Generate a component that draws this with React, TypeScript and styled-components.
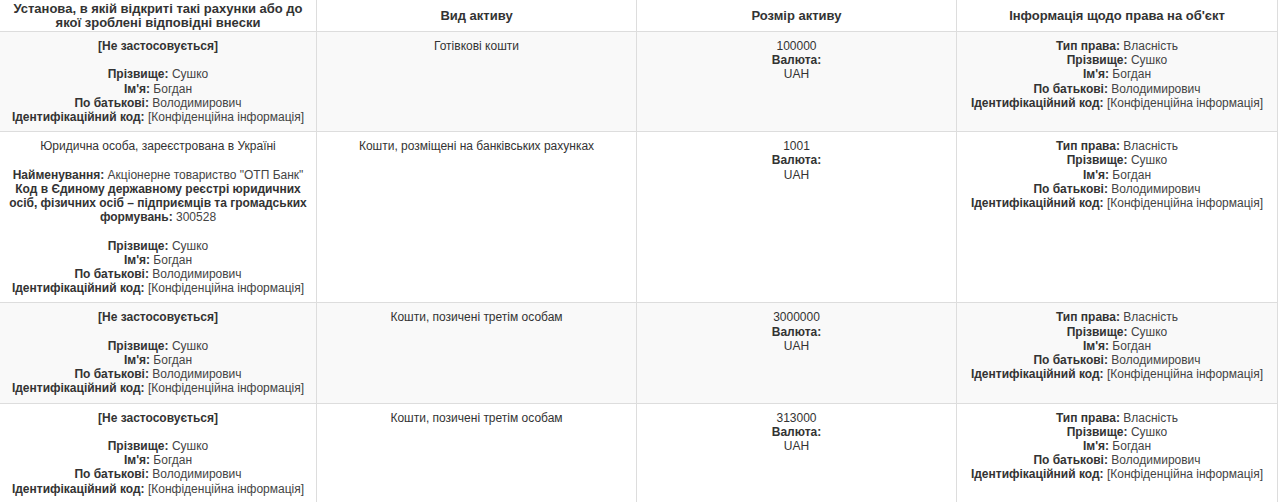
import React from "react";
import styled, { createGlobalStyle } from "styled-components";

const Global = createGlobalStyle`
  html, body { margin: 0; padding: 0; background: #fff; }
  body { font-family: "Liberation Sans", Arial, sans-serif; color: #333; }
`;

const Table = styled.div`
  width: 1278px;
  display: flex;
  flex-direction: column;
`;

const Row = styled.div<{ $striped?: boolean }>`
  display: grid;
  grid-template-columns: 317px 320px 320px 321px;
  background: ${(p) => (p.$striped ? "#f9f9f9" : "#fff")};
`;

const HeadCell = styled.div`
  box-sizing: border-box;
  padding: 2px 8px 1px;
  border-right: 1px solid #ddd;
  border-bottom: 1px solid #ddd;
  font-size: 13px;
  line-height: 14px;
  font-weight: bold;
  color: #333;
  text-align: center;
  display: flex;
  align-items: center;
  justify-content: center;
  min-height: 32px;
`;

const Cell = styled.div`
  box-sizing: border-box;
  padding: 7px 8px 7px;
  border-right: 1px solid #ddd;
  border-bottom: 1px solid #ddd;
  font-size: 12px;
  line-height: 14.2px;
  color: #333;
  text-align: center;
`;

const Label = styled.b`
  font-weight: bold;
  color: #333;
`;

const Value = styled.span`
  color: #444;
`;

const Blank = styled.div`
  height: 14.2px;
`;

const Line: React.FC<{ label?: string; value?: string }> = ({ label, value }) => (
  <div>
    {label && <Label>{label}: </Label>}
    {value && <Value>{value}</Value>}
  </div>
);

const Person: React.FC = () => (
  <>
    <Line label="Прізвище" value="Сушко" />
    <Line label="Ім'я" value="Богдан" />
    <Line label="По батькові" value="Володимирович" />
    <Line label="Ідентифікаційний код" value="[Конфіденційна інформація]" />
  </>
);

const Rights: React.FC = () => (
  <Cell>
    <Line label="Тип права" value="Власність" />
    <Person />
  </Cell>
);

const Amount: React.FC<{ sum: string }> = ({ sum }) => (
  <Cell>
    <div>{sum}</div>
    <div>
      <Label>Валюта:</Label>
    </div>
    <div>UAH</div>
  </Cell>
);

const NotApplicable: React.FC = () => (
  <Cell>
    <div>
      <Label>[Не застосовується]</Label>
    </div>
    <Blank />
    <Person />
  </Cell>
);

const LegalEntity: React.FC = () => (
  <Cell>
    <div>Юридична особа, зареєстрована в Україні</div>
    <Blank />
    <Line label="Найменування" value={'Акціонерне товариство "ОТП Банк"'} />
    <div>
      <Label>Код в Єдиному державному реєстрі юридичних осіб, фізичних осіб – підприємців та громадських формувань:</Label>{" "}
      <Value>300528</Value>
    </div>
    <Blank />
    <Person />
  </Cell>
);

const rows = [
  { kind: "na", asset: "Готівкові кошти", sum: "100000" },
  { kind: "bank", asset: "Кошти, розміщені на банківських рахунках", sum: "1001" },
  { kind: "na", asset: "Кошти, позичені третім особам", sum: "3000000" },
  { kind: "na", asset: "Кошти, позичені третім особам", sum: "313000" },
];

export default function App() {
  return (
    <>
      <Global />
      <Table>
        <Row>
          <HeadCell>Установа, в якій відкриті такі рахунки або до якої зроблені відповідні внески</HeadCell>
          <HeadCell>Вид активу</HeadCell>
          <HeadCell>Розмір активу</HeadCell>
          <HeadCell>Інформація щодо права на об'єкт</HeadCell>
        </Row>
        {rows.map((r, i) => (
          <Row key={i} $striped={i % 2 === 0}>
            {r.kind === "na" ? <NotApplicable /> : <LegalEntity />}
            <Cell>{r.asset}</Cell>
            <Amount sum={r.sum} />
            <Rights />
          </Row>
        ))}
      </Table>
    </>
  );
}
